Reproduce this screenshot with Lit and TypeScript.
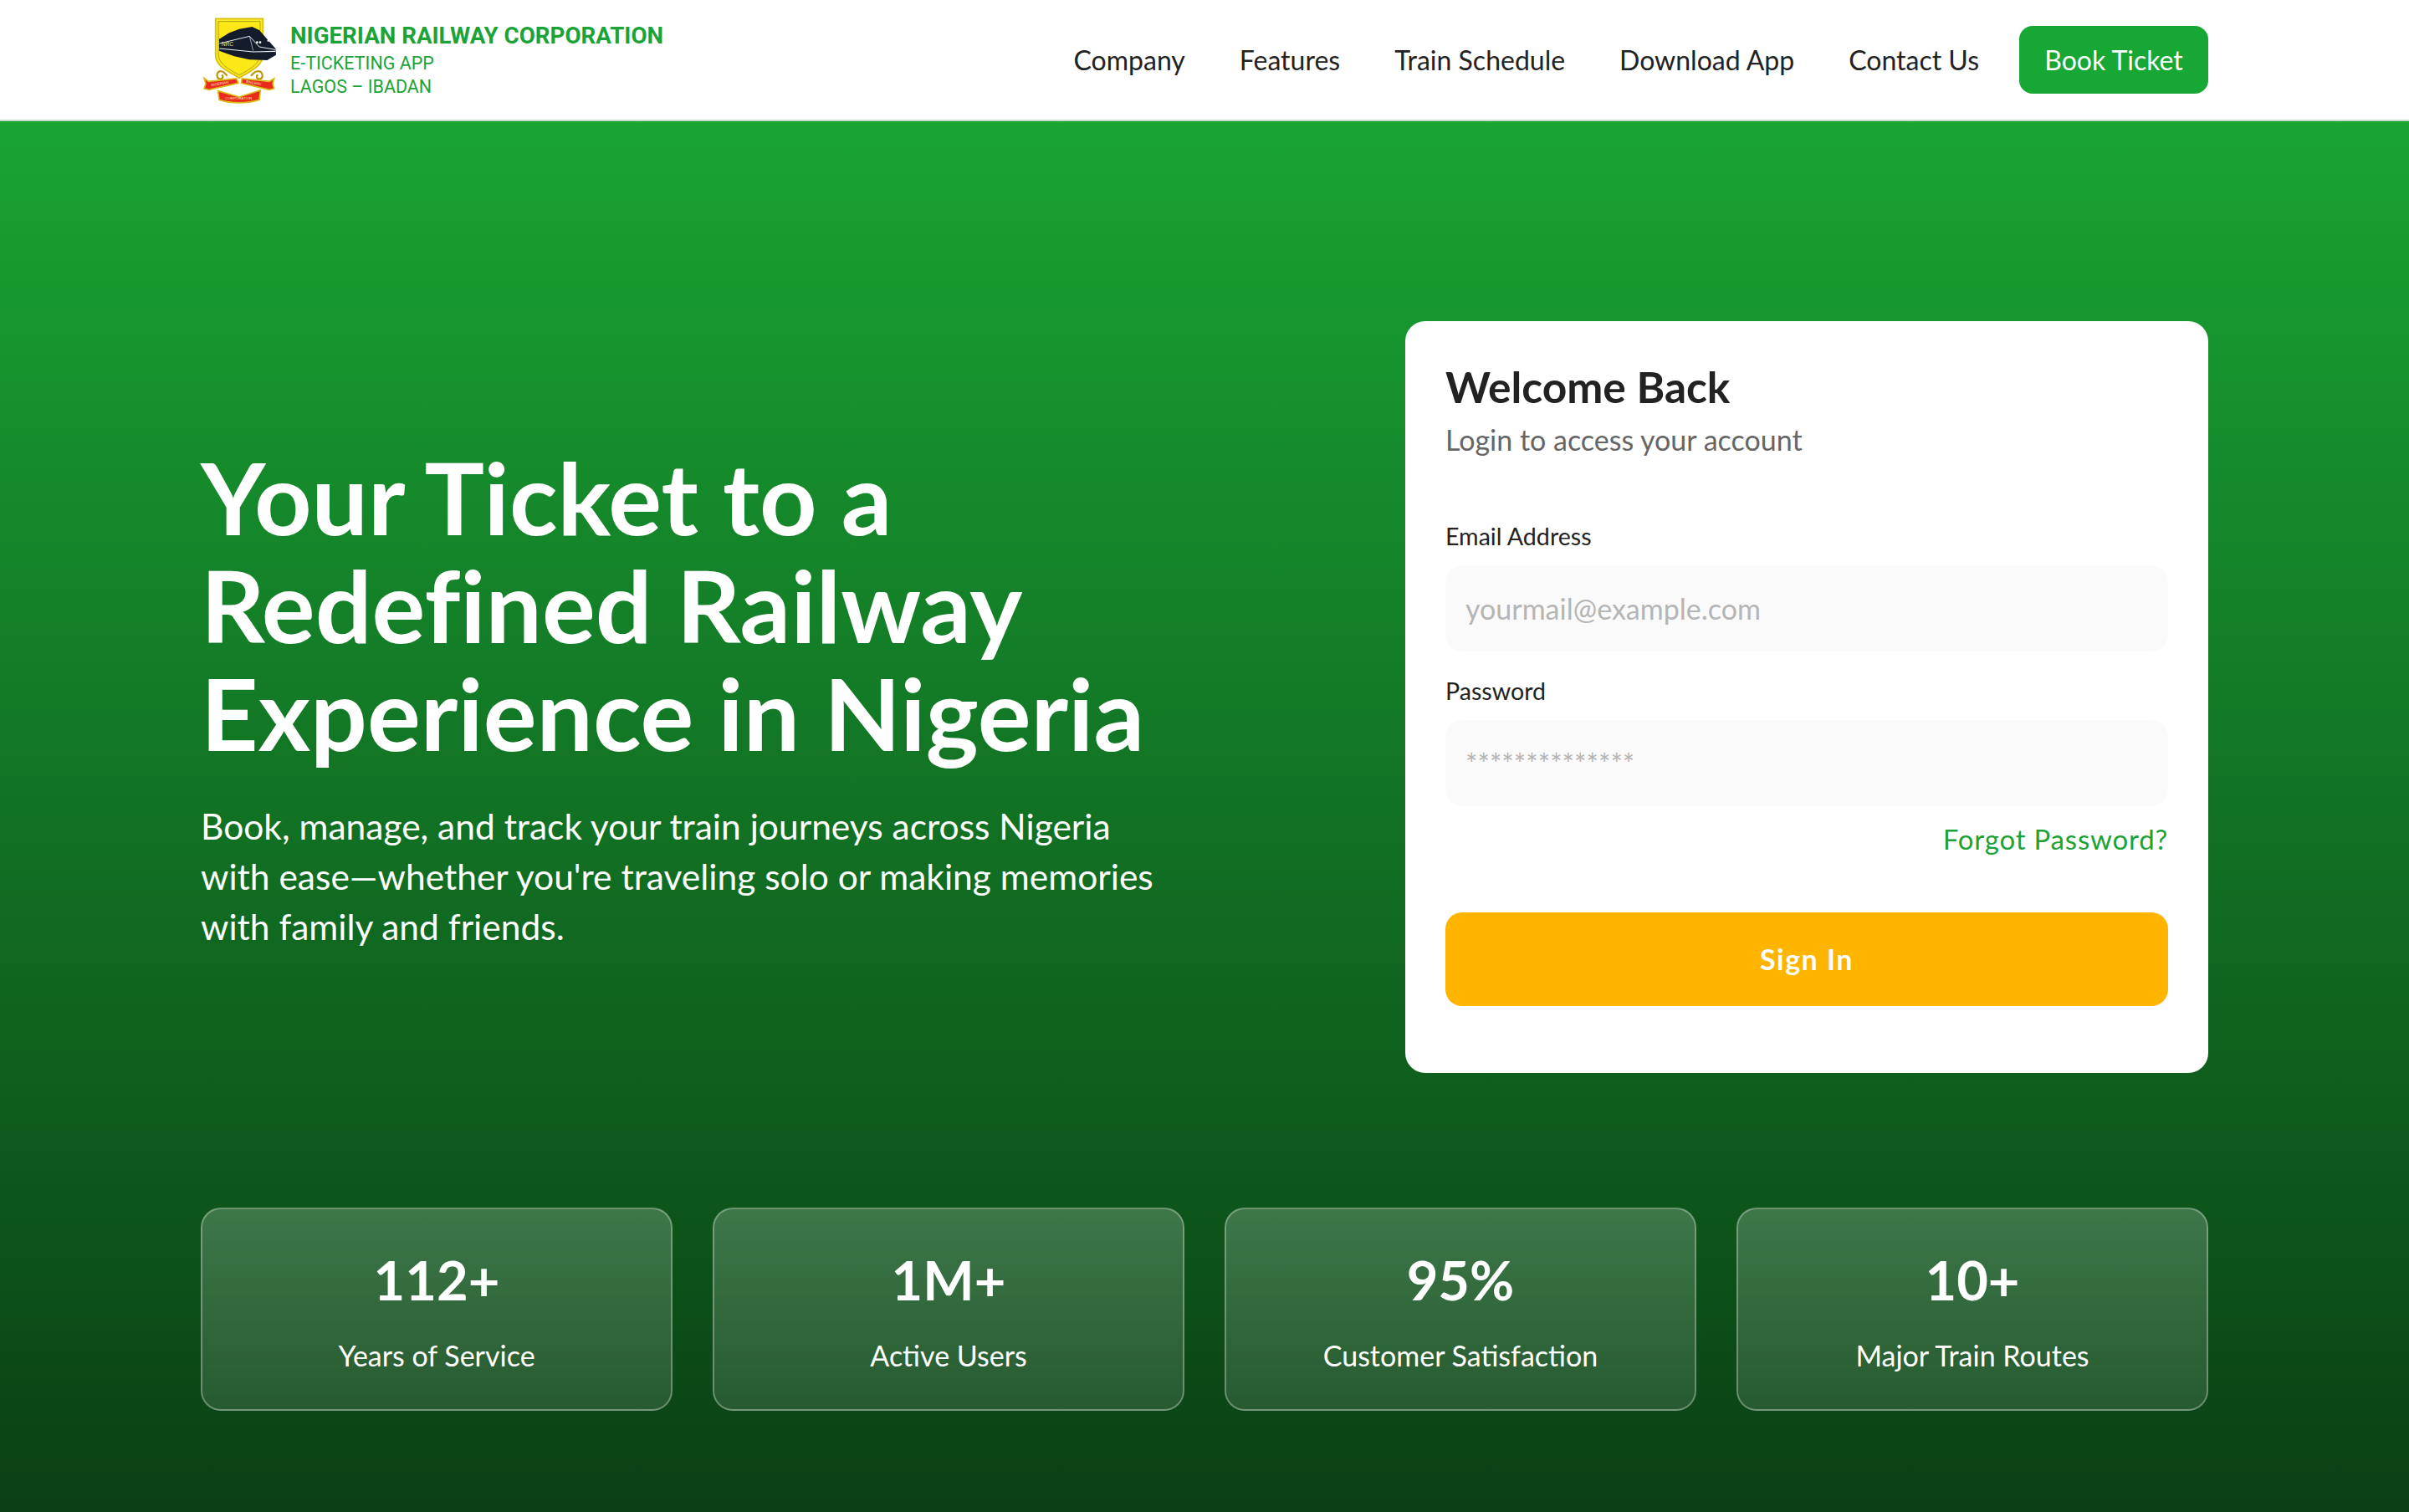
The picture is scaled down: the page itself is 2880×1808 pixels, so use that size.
import { LitElement, html, css, svg } from "lit";
import { customElement } from "lit/decorators.js";

const crest = svg`<svg class="crest" viewBox="30 25 270 315" aria-hidden="true">
  <path d="M168 248C135 226 83 208 83 165V35H253V165C253 208 200 226 168 248Z" fill="#fdea1c" stroke="#d9bd12" stroke-width="5"/>
  <path d="M168 238C140 220 93 202 93 160V45H243V160C243 202 196 220 168 238Z" fill="#fbe816" stroke="#5a6414" stroke-width="1.500"/>
  <path d="M96 108L132 86L168 72L214 64L240 76L268 108L298 142L300 165L268 184L205 182L150 170L96 150Z" fill="#141b2b"/>
  <path d="M97 124L205 98L240 136L297 146" fill="none" stroke="#e3e8ec" stroke-width="3"/>
  <path d="M205 98L218 150" fill="none" stroke="#dfe5ea" stroke-width="2"/>
  <path d="M97 142L218 154L298 152" fill="none" stroke="#eef2f4" stroke-width="3.500"/>
  <circle cx="232" cy="120" r="4" fill="#fff"/><circle cx="243" cy="120" r="4" fill="#fff"/><circle cx="272" cy="114" r="3.500" fill="#fff"/>
  <text x="104" y="132" font-size="20" font-family="Liberation Sans" fill="#f1e66a">NRC</text>
  <path d="M125 240C102 210 84 226 90 246C100 258 116 248 106 236M210 240C234 210 256 226 250 246C240 258 224 248 234 236" fill="none" stroke="#b89a10" stroke-width="7"/>
  <path d="M42 248L58 260L158 250L165 266L60 290L42 286L48 268Z" fill="#e92a1c" stroke="#d9bd12" stroke-width="5"/>
  <path d="M293 250L276 260L178 250L175 266L276 290L293 286L288 268Z" fill="#e92a1c" stroke="#d9bd12" stroke-width="5"/>
  <path d="M92 294L168 316L244 292L240 326C195 340 140 340 96 326Z" fill="#e92a1c" stroke="#d9bd12" stroke-width="5"/>
  <text x="68" y="278" font-size="13" font-family="Liberation Sans" fill="#f8e9c0" transform="rotate(-10 68 278)">NIGERIAN</text>
  <text x="192" y="265" font-size="13" font-family="Liberation Sans" fill="#f8e9c0" transform="rotate(10 192 265)">RAILWAY</text>
  <text x="118" y="326" font-size="13" font-family="Liberation Sans" fill="#f8e9c0">CORPORATION</text>
</svg>`;

const stats = [
  ["112+", "Years of Service"],
  ["1M+", "Active Users"],
  ["95%", "Customer Satisfaction"],
  ["10+", "Major Train Routes"],
];

@customElement("app-root")
export class AppRoot extends LitElement {
  static styles = css`
    :host { display: block; width: 2880px; height: 1808px; overflow: hidden; font-family: "Lato", "Open Sans", sans-serif; }
    * { box-sizing: border-box; }
    .nav { height: 145px; background: #fff; padding: 0 240px; border-bottom: 2px solid #c9d9cc; display: flex; align-items: center; justify-content: space-between; }
    .brand { display: flex; align-items: center; gap: 17px; }
    .crest { width: 90px; height: 105px; display: block; }
    .brand-text { font-family: "Roboto", sans-serif; color: #1ca338; display: flex; flex-direction: column; }
    .brand-text b { font-size: 27.700px; line-height: 34px; font-weight: 700; margin-bottom: 2px; }
    .brand-text span { font-size: 21.500px; line-height: 28px; font-weight: 400; }
    .links { display: flex; align-items: center; gap: 65px; font-size: 32px; color: #222; }
    .book { margin-left: -17px; width: 226px; height: 81px; border: 0; border-radius: 16px; background: #17a735; color: #fff; font: inherit; font-size: 32px; display: flex; align-items: center; justify-content: center; }
    .main { height: 1663px; background: linear-gradient(180deg, #19a433 0%, #0a3f14 100%); padding: 239px 240px 0; display: flex; flex-direction: column; }
    .hero { display: flex; justify-content: space-between; align-items: center; height: 899px; }
    .copy { width: 1240px; color: #fff; margin-top: 1px; }
    h1 { margin: 0 0 41px; font-size: 119.500px; line-height: 128.700px; font-weight: 700; white-space: nowrap; font-variant-ligatures: none; }
    .copy p { margin: 0; font-size: 42.500px; line-height: 60px; font-weight: 400; white-space: nowrap; }
    .card { width: 960px; height: 899px; background: #fff; border-radius: 24px; padding: 48px; display: flex; flex-direction: column; }
    h2 { margin: -2px 0 0; font-size: 51.500px; line-height: 64px; font-weight: 700; color: #222; }
    .sub { margin: 8px 0 0; font-size: 34px; line-height: 48px; color: #666; }
    label { display: block; font-size: 28.600px; line-height: 36px; color: #222; }
    .email-label { margin-top: 73px; margin-bottom: 17px; }
    .pw-label { margin-top: 29px; margin-bottom: 17px; }
    input { width: 100%; height: 103px; border: 0; border-radius: 20px; background: #fafafa; padding: 0 24px; font: inherit; font-size: 34px; outline: 0; }
    input::placeholder { color: #b5b5b5; opacity: 1; }
    .forgot { align-self: flex-end; margin-top: 19px; font-size: 33px; line-height: 40px; color: #1ca338; letter-spacing: .8px; }
    .signin { margin-top: 67.500px; height: 112px; border: 0; border-radius: 20px; background: #ffb400; color: #fff; font: inherit; font-size: 34px; font-weight: 700; letter-spacing: 1.500px; }
    .stats { margin-top: 161px; display: grid; grid-template-columns: repeat(4, 1fr); gap: 48px; }
    .stat { height: 243px; border-radius: 24px; border: 2px solid rgba(255,255,255,.3); background: linear-gradient(180deg, rgba(255,255,255,.2), rgba(255,255,255,.115)); color: #fff; text-align: center; padding-top: 42px; }
    .num { font-size: 65px; line-height: 84px; font-weight: 700; }
    .lbl { margin-top: 25px; font-size: 34px; line-height: 48px; }
  `;

  render() {
    return html`
      <header class="nav">
        <div class="brand">
          ${crest}
          <div class="brand-text"><b>NIGERIAN RAILWAY CORPORATION</b><span>E-TICKETING APP</span><span>LAGOS – IBADAN</span></div>
        </div>
        <nav class="links">
          <a>Company</a><a>Features</a><a>Train Schedule</a><a>Download App</a><a>Contact Us</a>
          <button class="book">Book Ticket</button>
        </nav>
      </header>
      <main class="main">
        <section class="hero">
          <div class="copy">
            <h1>Your Ticket to a<br />Redefined Railway<br />Experience in Nigeria</h1>
            <p>Book, manage, and track your train journeys across Nigeria<br />with ease—whether you're traveling solo or making memories<br />with family and friends.</p>
          </div>
          <form class="card">
            <h2>Welcome Back</h2>
            <p class="sub">Login to access your account</p>
            <label class="email-label">Email Address</label>
            <input type="text" placeholder="yourmail@example.com" />
            <label class="pw-label">Password</label>
            <input type="text" placeholder="**************" />
            <a class="forgot">Forgot Password?</a>
            <button class="signin" type="button">Sign In</button>
          </form>
        </section>
        <section class="stats">
          ${stats.map(([n, l]) => html`<div class="stat"><div class="num">${n}</div><div class="lbl">${l}</div></div>`)}
        </section>
      </main>
    `;
  }
}
